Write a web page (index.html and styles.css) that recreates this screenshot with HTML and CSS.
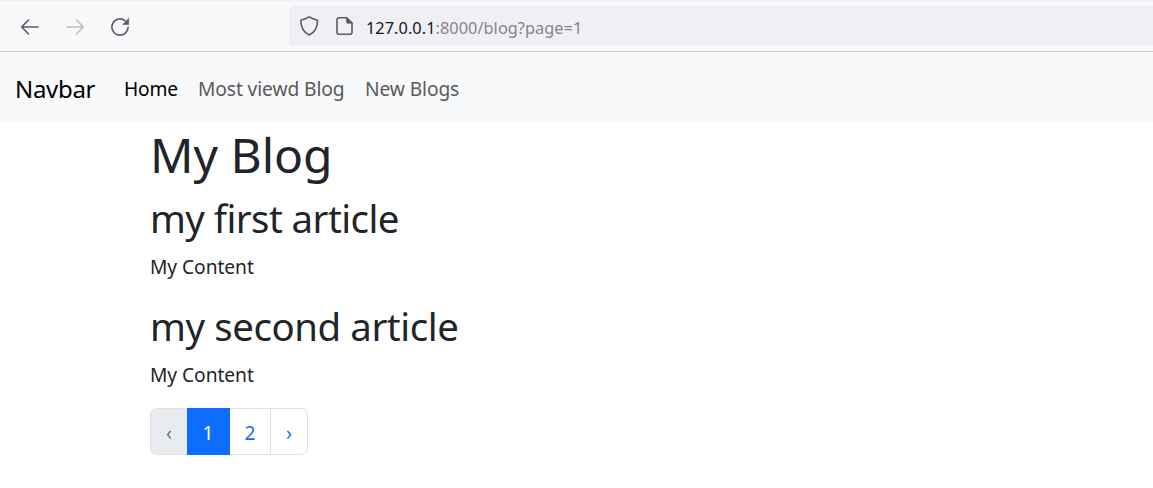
FILE: index.html
```html
<!DOCTYPE html>
<html lang="en">
<head>
<meta charset="utf-8">
<title>My Blog</title>
<link rel="stylesheet" href="styles.css">
</head>
<body>
<header class="browser">
  <div class="controls">
    <svg class="icon" viewBox="0 0 20 20"><path d="M18 10H2M8.500 3 1.700 10 8.500 17"/></svg>
    <svg class="icon disabled" viewBox="0 0 20 20"><path d="M2 10H18M11.500 3 18.300 10 11.500 17"/></svg>
    <svg class="icon" viewBox="0 0 20 20"><path d="M18.100 10.300A8.100 8.100 0 1 1 15.400 4"/><path class="solid" d="M18.800 1.200v6.500h-6.300z"/></svg>
  </div>
  <div class="address">
    <svg class="icon shield" viewBox="0 0 20 20"><path d="M9.200.9C6.800 2.500 4 3.500.8 4.200.8 10.800 3.300 16.200 9.200 19c5.900-2.800 8.400-8.200 8.400-14.800C14.400 3.500 11.600 2.500 9.200.9z"/></svg>
    <svg class="icon file" viewBox="0 0 20 20"><path d="M4 1.800h7.700l5.300 5.200v9.300a2 2 0 0 1-2 2H4a2 2 0 0 1-2-2V3.800a2 2 0 0 1 2-2z"/><path class="solid" d="M11.300 1.200 17.700 7.600h-4.900a1.500 1.500 0 0 1-1.500-1.500z"/></svg>
    <span class="url"><span class="host">127.0.0.1</span>:8000/blog?page=1</span>
  </div>
</header>
<nav class="navbar">
  <a class="brand">Navbar</a>
  <a class="link home">Home</a>
  <a class="link viewed">Most viewd Blog</a>
  <a class="link">New Blogs</a>
</nav>
<main class="container">
  <h1>My Blog</h1>
  <h2 class="first">my first article</h2>
  <p>My Content</p>
  <h2>my second article</h2>
  <p>My Content</p>
  <div class="pagination">
    <span class="page prev">‹</span>
    <span class="page active">1</span>
    <span class="page two">2</span>
    <span class="page next">›</span>
  </div>
</main>
</body>
</html>
```
FILE: styles.css
```css
* { box-sizing: border-box; }
body {
  margin: 0;
  height: 488px;
  overflow: hidden;
  background: #fff;
  color: #212529;
  font: 19.2px/30px "Noto Sans", "Open Sans", sans-serif;
}
.browser {
  display: flex;
  height: 52px;
  padding: 5px 0 5px 20px;
  border-top: 1px solid #f0f0f2;
  border-bottom: 1px solid #ccccd1;
  background: #f9f9fb;
}
.controls { display: flex; gap: 25px; width: 269px; padding-top: 11px; }
.icon {
  width: 20px;
  height: 20px;
  flex: none;
  fill: none;
  stroke: #5b5b66;
  stroke-width: 1.6;
  stroke-linecap: round;
  stroke-linejoin: round;
}
.icon .solid { fill: #5b5b66; stroke-width: .3; }
.disabled { stroke: #bdbdc2; }
.address {
  display: flex;
  flex: 1;
  height: 40px;
  padding: 10px 10px 10px 11px;
  border-radius: 5px 0 0 5px;
  background: #f0f0f4;
}
.file { margin-left: 15px; }
.url {
  margin: 1px 0 0 11px;
  color: #85858b;
  font-size: 16.3px;
  line-height: 22px;
  letter-spacing: .06px;
  white-space: nowrap;
}
.host { color: #15141a; }
.navbar {
  display: flex;
  align-items: center;
  height: 70px;
  padding: 3px 15px 0;
  background: #f8f9fa;
}
.brand { width: 109px; color: #000; font-size: 24px; letter-spacing: -.3px; }
.link { color: #595a5b; letter-spacing: -.1px; }
.link.home { width: 74px; color: #000; letter-spacing: -.2px; }
.viewed { width: 167px; }
.container { padding-left: 150px; }
h1, h2, p { margin: 0; font-weight: 400; white-space: nowrap; }
h1 { height: 70px; padding-top: 3px; font-size: 48px; line-height: 60px; }
h2 { height: 58px; padding-top: 2px; font-size: 38.4px; line-height: 48px; letter-spacing: -.42px; }
.first { letter-spacing: -.56px; }
p { height: 50px; padding-top: 2px; letter-spacing: -.05px; }
.pagination { display: flex; width: 158px; height: 47px; }
.page {
  padding-top: 9px;
  border: 1px solid #dee2e6;
  border-left: 0;
  color: #0d6efd;
  text-align: center;
}
.prev {
  width: 37px;
  border-right: 0;
  border-left: 1px solid #dee2e6;
  border-radius: 7px 0 0 7px;
  background: #e9ecef;
  color: #6c757d;
}
.active { width: 43px; border-color: #0d6efd; background: #0d6efd; color: #fff; }
.two { width: 41px; }
.next { width: 37px; border-radius: 0 7px 7px 0; }
```
